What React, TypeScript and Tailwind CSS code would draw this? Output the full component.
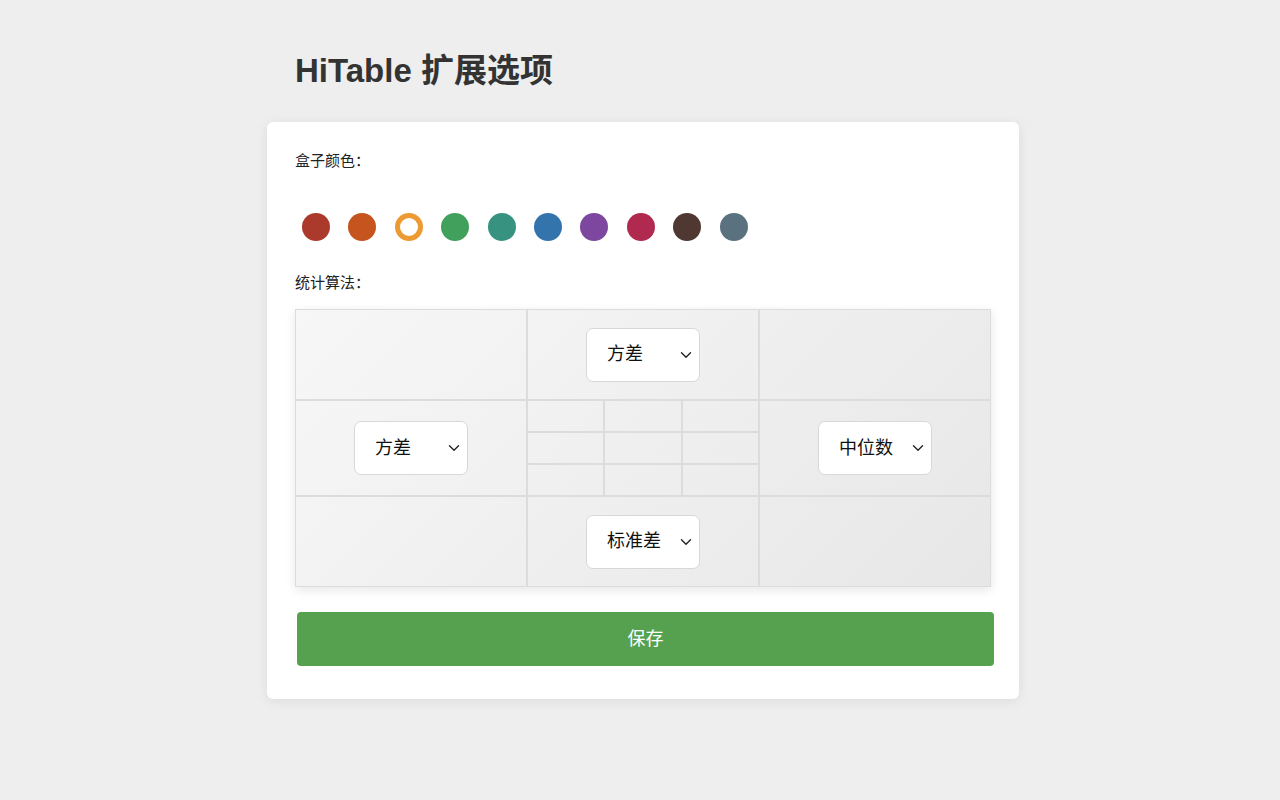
import React from "react";

const font = { fontFamily: '"Liberation Sans", "Noto Sans CJK SC", sans-serif' };

const colors = [
  "#ab3a2c",
  "#c5541f",
  "#ee9a33",
  "#41a05b",
  "#37937f",
  "#3274ab",
  "#7d479f",
  "#b02a4f",
  "#4f3831",
  "#5a7180",
];

function Select({ label }: { label: string }) {
  return (
    <div className="flex h-[54px] w-[114px] items-center justify-between rounded-[7px] border border-[#d8d8d8] bg-white pl-[20px] pr-[7px] text-[18px] text-[#111]">
      <span>{label}</span>
      <svg width="12" height="8" viewBox="0 0 12 8" fill="none">
        <path d="M1.5 1.8 L6 6.2 L10.5 1.8" stroke="#222" strokeWidth="1.4" strokeLinecap="round" strokeLinejoin="round" />
      </svg>
    </div>
  );
}

function Cell({ children }: { children?: React.ReactNode }) {
  return <div className="flex items-center justify-center border border-[#dcdcdc]">{children}</div>;
}

export default function App() {
  return (
    <div className="min-h-[800px] w-full bg-[#eeeeee]" style={font}>
      <div className="ml-[267px] w-[752px] pt-[48px]">
        <h1 className="pl-[28px] text-[33px] font-bold leading-[46px] text-[#333]">HiTable 扩展选项</h1>
        <div className="mt-[28px] rounded-[6px] bg-white px-[28px] pb-[33px] pt-[28px] shadow-[0_2px_12px_rgba(0,0,0,0.08)]">
          <div className="text-[15px] leading-[22px] text-[#222]">盒子颜色：</div>
          <div className="mt-[41px] flex gap-[18.4px] pl-[7px]">
            {colors.map((c, i) =>
              i === 2 ? (
                <div key={c} className="h-[28px] w-[28px] rounded-full border-[5px] border-[#ee9a33] bg-white" />
              ) : (
                <div key={c} className="h-[28px] w-[28px] rounded-full" style={{ backgroundColor: c }} />
              )
            )}
          </div>
          <div className="mt-[31px] text-[15px] leading-[22px] text-[#222]">统计算法：</div>
          <div className="mt-[15px] grid w-[696px] grid-cols-[232px_232px_232px] grid-rows-[91px_96px_91px] bg-[linear-gradient(135deg,#f7f7f7,#e7e7e7)] shadow-[0_3px_10px_rgba(0,0,0,0.1)]">
            <Cell />
            <Cell>
              <Select label="方差" />
            </Cell>
            <Cell />
            <Cell>
              <Select label="方差" />
            </Cell>
            <div className="grid grid-cols-3 grid-rows-3">
              {Array.from({ length: 9 }).map((_, i) => (
                <div key={i} className="border border-[#dcdcdc]" />
              ))}
            </div>
            <Cell>
              <Select label="中位数" />
            </Cell>
            <Cell />
            <Cell>
              <Select label="标准差" />
            </Cell>
            <Cell />
          </div>
          <button className="ml-[2px] mt-[25px] flex h-[54px] w-[697px] items-center justify-center rounded-[4px] bg-[#56a14f] text-[18px] text-white">
            保存
          </button>
        </div>
      </div>
    </div>
  );
}
